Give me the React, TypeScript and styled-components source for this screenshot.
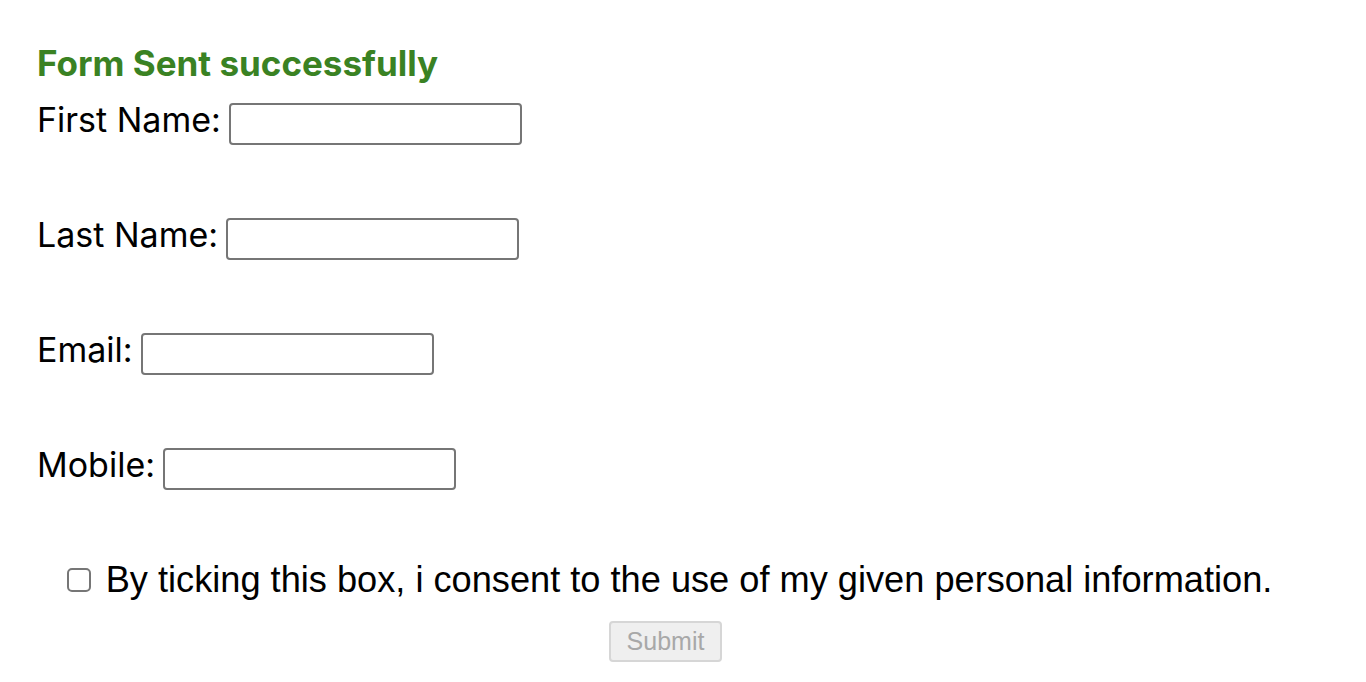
import styled, { createGlobalStyle } from "styled-components";

const GlobalStyle = createGlobalStyle`
  body {
    margin: 0;
    background: #ffffff;
    font-family: Inter, "Noto Sans", sans-serif;
    color: #000000;
  }
`;

type FieldProps = {
  label: string;
  type?: string;
};

const Field = ({ label, type = "text" }: FieldProps) => {
  return (
    <Row>
      <Label>{label}</Label>
      <Input type={type} />
    </Row>
  );
};

export default function App() {
  return (
    <>
      <GlobalStyle />
      <Page>
        <Heading>Form Sent successfully</Heading>
        <Fields>
          <Field label="First Name:" />
          <Field label="Last Name:" />
          <Field label="Email:" type="email" />
          <Field label="Mobile:" type="tel" />
        </Fields>
        <Consent>
          <ConsentLine>
            <Checkbox type="checkbox" />
            <ConsentText>
              By ticking this box, i consent to the use of my given personal
              information.
            </ConsentText>
          </ConsentLine>
          <SubmitButton disabled>Submit</SubmitButton>
        </Consent>
      </Page>
    </>
  );
}

const Page = styled.div`
  width: 1331px;
  padding: 40px 0 0 37px;
  box-sizing: border-box;
`;

const Heading = styled.h2`
  margin: 0;
  font-size: 35px;
  font-weight: 700;
  line-height: 46px;
  color: #3a8223;
`;

const Fields = styled.div`
  display: flex;
  flex-direction: column;
  gap: 73px;
  margin-top: 17px;
`;

const Row = styled.div`
  display: flex;
  align-items: flex-start;
  gap: 8px;
  height: 42px;
`;

const Label = styled.label`
  font-size: 34px;
  line-height: 34px;
`;

const Input = styled.input`
  width: 293px;
  height: 42px;
  box-sizing: border-box;
  border: 2px solid #767676;
  border-radius: 4px;
  background: #ffffff;
  padding: 0 6px;
`;

const Consent = styled.div`
  display: flex;
  flex-direction: column;
  align-items: center;
  margin-top: 67px;
  margin-left: -37px;
`;

const ConsentLine = styled.div`
  display: flex;
  align-items: center;
  gap: 15px;
  padding-left: 8px;
`;

const Checkbox = styled.input`
  appearance: none;
  width: 24px;
  height: 24px;
  margin: 0;
  box-sizing: border-box;
  border: 2px solid #767676;
  border-radius: 5px;
  background: #ffffff;
`;

const ConsentText = styled.span`
  font-family: "Liberation Sans", Arial, sans-serif;
  font-size: 36.2px;
  line-height: 46px;
`;

const SubmitButton = styled.button`
  margin-top: 18px;
  width: 113px;
  height: 41px;
  font-family: "Liberation Sans", Arial, sans-serif;
  font-size: 25px;
  color: #a8a8a8;
  background: #efefef;
  border: 2px solid #d6d6d6;
  border-radius: 4px;
  padding: 0;
`;
